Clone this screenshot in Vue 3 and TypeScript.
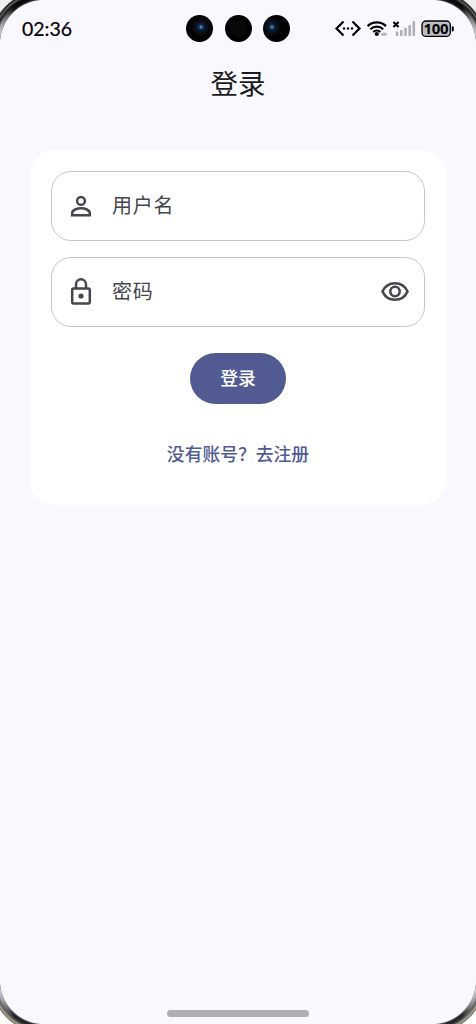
<script setup lang="ts">
import { ref } from 'vue'

const username = ref('')
const password = ref('')
const showPassword = ref(false)
const corners: string[] = ['tl', 'tr', 'bl', 'br']
const lenses: string[] = ['left', 'middle', 'right']
</script>

<template>
  <main class="screen">
    <i v-for="c in corners" :key="c" class="corner" :class="c"></i>
    <header class="status">
      <span class="time">02:36</span>
      <div class="cameras">
        <span v-for="l in lenses" :key="l" class="lens" :class="l"></span>
      </div>
      <svg class="indicators" width="124" height="24" viewBox="332 17 124 24">
        <path d="M343.5 21.5 336.5 28.5 343.5 35.5M352.5 21.5 359.5 28.5 352.5 35.5" fill="none" stroke="#000" stroke-width="2.2" />
        <g fill="#000"><circle cx="344" cy="28.5" r="1.2" /><circle cx="348" cy="28.5" r="1.2" /><circle cx="352" cy="28.5" r="1.2" /></g>
        <path d="M367.6 26.1a13.2 13.2 0 0 1 18.4 0M370.4 29.3a9.2 9.2 0 0 1 12.8 0M373.2 32a5.4 5.4 0 0 1 7.2 0" fill="none" stroke="#000" stroke-width="2.2" />
        <circle cx="376.8" cy="34" r="2.1" />
        <ellipse cx="384" cy="34.2" rx="3" ry="1.7" fill="#bbb9c0" />
        <path d="M393.4 21.9 398.6 27.1M398.6 21.9 393.4 27.1" stroke="#000" stroke-width="2.1" />
        <g fill="#b0afb5">
          <rect x="395.8" y="31.4" width="2.6" height="4.6" rx=".8" /><rect x="400" y="30" width="2.6" height="6" rx=".8" /><rect x="404.2" y="27.8" width="2.6" height="8.2" rx=".8" /><rect x="408.4" y="25" width="2.6" height="11" rx=".8" /><rect x="412.5" y="21" width="2.6" height="15" rx=".8" />
        </g>
        <rect x="422" y="21" width="28.3" height="15.4" rx="4" fill="#bdbcc2" stroke="#000" stroke-width="1.3" />
        <path d="M451.8 26.2h.7q1.3 0 1.3 1.3v2.6q0 1.3-1.3 1.3h-.7z" />
        <text x="436.1" y="34" text-anchor="middle" textLength="25" class="percent">100</text>
      </svg>
    </header>

    <h1>登录</h1>

    <form class="card" @submit.prevent>
      <label class="field">
        <svg class="lead" width="30" height="30" viewBox="0 0 30 30" fill="none" stroke="#47464f" stroke-width="2.5">
          <circle cx="15" cy="9.9" r="3.9" />
          <path d="M6.2 24.3v-2.2c0-3.2 5-4.8 8.8-4.8s8.8 1.6 8.8 4.8v2.2z" />
        </svg>
        <input v-model="username" placeholder="用户名" />
      </label>
      <label class="field">
        <svg class="lead" width="30" height="30" viewBox="0 0 30 30" fill="none" stroke="#47464f" stroke-width="2.5">
          <rect x="6.2" y="11.4" width="17.6" height="15" rx="1.3" />
          <path d="M10 11V7.3a5 5 0 0 1 10 0V11" />
          <circle cx="15" cy="19" r="2.6" fill="#47464f" stroke="none" />
        </svg>
        <input v-model="password" :type="showPassword ? 'text' : 'password'" placeholder="密码" />
        <button class="eye" type="button" aria-label="显示密码" @click="showPassword = !showPassword">
          <svg width="30" height="30" viewBox="0 0 30 30" fill="none" stroke="#47464f" stroke-width="2.6">
            <path d="M2.5 14.500C4.800 9.300 9.500 6.200 15 6.200S25.200 9.300 27.500 14.500C25.200 19.700 20.500 22.800 15 22.800S4.800 19.700 2.500 14.500Z" />
            <circle cx="15" cy="14.500" r="4.700" />
          </svg>
        </button>
      </label>
      <button class="submit" type="submit">登录</button>
      <a class="register">没有账号？去注册</a>
    </form>
    <div class="home"></div>
  </main>
</template>

<style>
body { margin: 0; background: #faf8ff; }
</style>

<style scoped>
* { box-sizing: border-box; }
.screen {
  position: relative;
  width: 476px;
  height: 1024px;
  overflow: hidden;
  display: flex;
  flex-direction: column;
  align-items: center;
  background: #faf8ff;
  font-family: "Noto Sans CJK SC", sans-serif;
}
.corner {
  position: absolute;
  width: 42px;
  height: 42px;
  background: radial-gradient(circle at 44px 44px, transparent 43.6px, #3a3a3c 44.6px, #0c0c0c 46px, #080808 49px, #343434 50.5px, #666 51.5px, #151515 53px, #eee 54.5px);
}
.corner::after {
  content: "";
  position: absolute;
  inset: 0;
  background: radial-gradient(circle at 44px 44px, transparent 43.6px, #d4d3d8 44.8px, #b0afb4 47px, transparent 50px);
  -webkit-mask: linear-gradient(to right, #000 0, transparent 14px);
  mask: linear-gradient(to right, #000 0, transparent 14px);
}
.tl { left: 0; top: 0; }
.tr { right: 0; top: 0; transform: scaleX(-1); }
.bl { left: 0; bottom: 0; transform: scaleY(-1); }
.br { right: 0; bottom: 0; transform: scale(-1); }
.bl, .br {
  background: radial-gradient(circle at 44px 44px, transparent 43.6px, #555558 44.6px, #1b1b1c 46px, #38383a 48.5px, #77736b 50px, #aaa391 51.5px, #706b60 52.7px, #fff 53.5px);
}
.status {
  width: 100%;
  height: 57px;
  display: grid;
  grid-template-columns: 1fr 104px 1fr;
  align-items: center;
  padding: 0 20px 0 22px;
}
.time { font: 400 19.5px/24px Lato, sans-serif; color: #000; -webkit-text-stroke: .2px #000; }
.cameras { display: flex; justify-content: space-between; margin-left: -.6px; margin-right: .6px; }
.lens { width: 27px; height: 27px; border-radius: 50%; background: #020202; }
.left { background: radial-gradient(circle at 15px 12px, #5d8fc0 0 .6px, #153d68 1.8px, #0c1c30 3.5px, #090b10 7px, #020202 10px); }
.right { background: radial-gradient(circle at 9px 12px, #5d8fc0 0 .6px, #153d68 1.8px, #0c1c30 3.5px, #090b10 7px, #020202 10px); }
.middle { background: radial-gradient(circle, #080808 8px, #000 9px); }
.indicators { justify-self: end; }
.percent { font: 700 15px "Noto Sans", sans-serif; fill: #000; }
h1 {
  margin: 5px 0 1px;
  height: 40px;
  font-size: 27.5px;
  line-height: 40px;
  font-weight: 400;
  color: #1b1b21;
}
.card {
  width: 416px;
  height: 355px;
  margin-top: 47px;
  padding: 21px 21px 0;
  border-radius: 25px;
  background: #fff;
  display: flex;
  flex-direction: column;
  align-items: center;
}
.field {
  width: 374px;
  height: 70px;
  flex: none;
  margin-bottom: 16px;
  padding: 0 14px;
  display: flex;
  align-items: center;
  border: 1.4px solid #c8c5d0;
  border-radius: 20px;
}
.lead { flex: none; margin-right: 16px; }
input {
  flex: 1;
  min-width: 0;
  height: 34px;
  margin-top: -3px;
  padding: 0;
  border: 0;
  outline: 0;
  background: transparent;
  font: 400 20px/30px "Noto Sans CJK SC", sans-serif;
  letter-spacing: .8px;
}
input::placeholder { color: #47464f; opacity: 1; }
.eye { display: flex; padding: 0; border: 0; background: none; }
.submit {
  width: 96px;
  height: 51px;
  margin-top: 10px;
  padding: 0 0 2px;
  border: 0;
  border-radius: 26px;
  background: #515b92;
  color: #fff;
  font: 500 17.8px/49px "Noto Sans CJK SC", sans-serif;
}
.register {
  margin-top: 35px;
  font-size: 17.8px;
  line-height: 28px;
  font-weight: 500;
  color: #515b92;
}
.home {
  width: 142px;
  height: 7px;
  margin-top: auto;
  margin-bottom: 7px;
  border-radius: 4px;
  background: #b0adb4;
}
</style>
